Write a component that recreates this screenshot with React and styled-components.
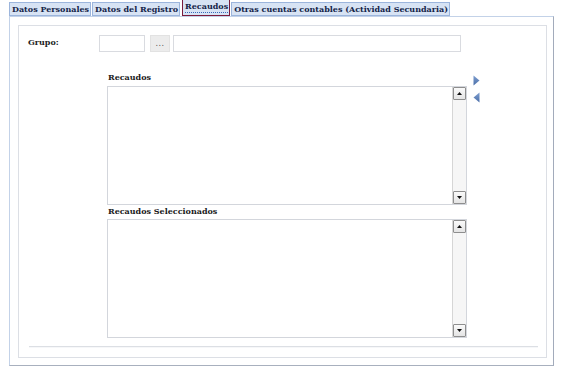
import React from "react";
import styled, { createGlobalStyle } from "styled-components";

const Global = createGlobalStyle`
  html, body { margin: 0; padding: 0; background: #fff; }
  body { font-family: "DejaVu Serif", serif; }
`;

const Page = styled.div`
  width: 563px;
  height: 371px;
  padding: 1px 0 0 9px;
  box-sizing: border-box;
`;

const TabBar = styled.div`
  display: flex;
  align-items: flex-end;
  height: 15px;
  gap: 1px;
`;

const Tab = styled.div`
  height: ${p => (p.$active ? "17px" : "14px")};
  box-sizing: border-box;
  padding: 0 1px 0 2px;
  margin-left: ${p => (p.$active ? "1px" : "0")};
  border: 1px solid ${p => (p.$active ? "#7a1c3c" : "#9cb5dc")};
  background: #d7e3f4;
  display: flex;
  align-items: ${p => (p.$active ? "flex-start" : "center")};
  font-size: 8px;
  font-weight: bold;
  color: #142448;
  white-space: nowrap;
  line-height: 12px;
  position: relative;
  z-index: 1;
`;

const TabLabel = styled.span`
  border-bottom: ${p => (p.$active ? "1px dotted #3a6ab8" : "none")};
  line-height: 11px;
  margin-top: ${p => (p.$active ? "1px" : "0")};
`;

const Panel = styled.div`
  width: 545px;
  height: 350px;
  box-sizing: border-box;
  border: 1px solid #c3d2e8;
  border-right-color: #a2abbb;
  border-bottom-color: #a8b0be;
  padding: 8px 6px 7px 8px;
  background: #fff;
`;

const Fieldset = styled.div`
  height: 100%;
  box-sizing: border-box;
  border: 1px solid #dcdfe5;
  padding: 9px 8px 0 9px;
  display: flex;
  flex-direction: column;
`;

const Row = styled.div`
  display: flex;
  align-items: flex-start;
  height: 17px;
`;

const FieldLabel = styled.div`
  width: 71px;
  font-size: 8px;
  font-weight: bold;
  color: #222;
  padding-top: 1px;
  line-height: 12px;
`;

const Input = styled.div`
  width: ${p => p.$w}px;
  height: 17px;
  box-sizing: border-box;
  border: 1px solid #d9dbe0;
  background: #fff;
  margin-right: ${p => p.$mr || 0}px;
`;

const DotsButton = styled.div`
  width: 20px;
  height: 17px;
  box-sizing: border-box;
  background: #ececec;
  border: 1px solid #e2e2e2;
  font-size: 8px;
  color: #555;
  display: flex;
  align-items: center;
  justify-content: center;
  margin-right: 3px;
  font-family: "DejaVu Sans", sans-serif;
  letter-spacing: 0.5px;
`;

const ListArea = styled.div`
  display: flex;
  margin-left: 79px;
  margin-top: 19px;
`;

const ListColumn = styled.div`
  width: 360px;
  display: flex;
  flex-direction: column;
`;

const ListLabel = styled.div`
  font-size: 8px;
  font-weight: bold;
  color: #1a1a1a;
  line-height: 12px;
  height: 12px;
  padding-left: 1px;
  margin-bottom: ${p => p.$mb}px;
`;

const ListBox = styled.div`
  height: 119px;
  box-sizing: border-box;
  border: 1px solid #d3d6dc;
  background: #fff;
  display: flex;
  justify-content: flex-end;
`;

const ScrollBar = styled.div`
  width: 13px;
  display: flex;
  flex-direction: column;
  justify-content: space-between;
  border-left: 1px solid #d6d6d6;
  background: #f6f6f6;
`;

const ScrollBtn = styled.div`
  width: 13px;
  height: 13px;
  box-sizing: border-box;
  border: 1px solid #8e8e8e;
  border-radius: 1px;
  background: linear-gradient(#fafafa, #e4e4e4);
  display: flex;
  align-items: center;
  justify-content: center;
`;

const Arrows = styled.div`
  display: flex;
  flex-direction: column;
  gap: 6px;
  margin-left: 6px;
  margin-top: 4px;
`;

const Separator = styled.div`
  margin: 8px 0 0 1px;
  width: 509px;
  height: 1px;
  background: #dcdfe4;
  box-shadow: 0 1px 0 #f6f7f9;
`;

const Tri = ({ dir }) => (
  <svg width="7" height="7" viewBox="0 0 7 7">
    {dir === "up" ? (
      <path d="M1 5 L3.5 2 L6 5 Z" fill="#111" />
    ) : (
      <path d="M1 2 L3.5 5 L6 2 Z" fill="#111" />
    )}
  </svg>
);

const Bar = () => (
  <ScrollBar>
    <ScrollBtn>
      <Tri dir="up" />
    </ScrollBtn>
    <ScrollBtn>
      <Tri dir="down" />
    </ScrollBtn>
  </ScrollBar>
);

const MoveArrow = ({ dir }) => (
  <svg width="7" height="11" viewBox="0 0 7 11">
    <defs>
      <linearGradient id={"g" + dir} x1="0" y1="0" x2="0" y2="1">
        <stop offset="0" stopColor="#7f9fd0" />
        <stop offset="1" stopColor="#4a6ea8" />
      </linearGradient>
    </defs>
    {dir === "right" ? (
      <path d="M0.5 0.5 L6.5 5.5 L0.5 10.5 Z" fill={"url(#g" + dir + ")"} />
    ) : (
      <path d="M6.5 0.5 L0.5 5.5 L6.5 10.5 Z" fill={"url(#g" + dir + ")"} />
    )}
  </svg>
);

const tabs = [
  "Datos Personales",
  "Datos del Registro",
  "Recaudos",
  "Otras cuentas contables (Actividad Secundaria)",
];

export default function App() {
  return (
    <>
      <Global />
      <Page>
        <TabBar>
          {tabs.map(t => {
            const active = t === "Recaudos";
            return (
              <Tab key={t} $active={active}>
                <TabLabel $active={active}>{t}</TabLabel>
              </Tab>
            );
          })}
        </TabBar>
        <Panel>
          <Fieldset>
            <Row>
              <FieldLabel>Grupo:</FieldLabel>
              <Input $w={46} $mr={5} />
              <DotsButton>...</DotsButton>
              <Input $w={288} />
            </Row>
            <ListArea>
              <ListColumn>
                <ListLabel $mb={3}>Recaudos</ListLabel>
                <ListBox>
                  <Bar />
                </ListBox>
                <ListLabel $mb={2}>Recaudos Seleccionados</ListLabel>
                <ListBox>
                  <Bar />
                </ListBox>
              </ListColumn>
              <Arrows>
                <MoveArrow dir="right" />
                <MoveArrow dir="left" />
              </Arrows>
            </ListArea>
            <Separator />
          </Fieldset>
        </Panel>
      </Page>
    </>
  );
}
